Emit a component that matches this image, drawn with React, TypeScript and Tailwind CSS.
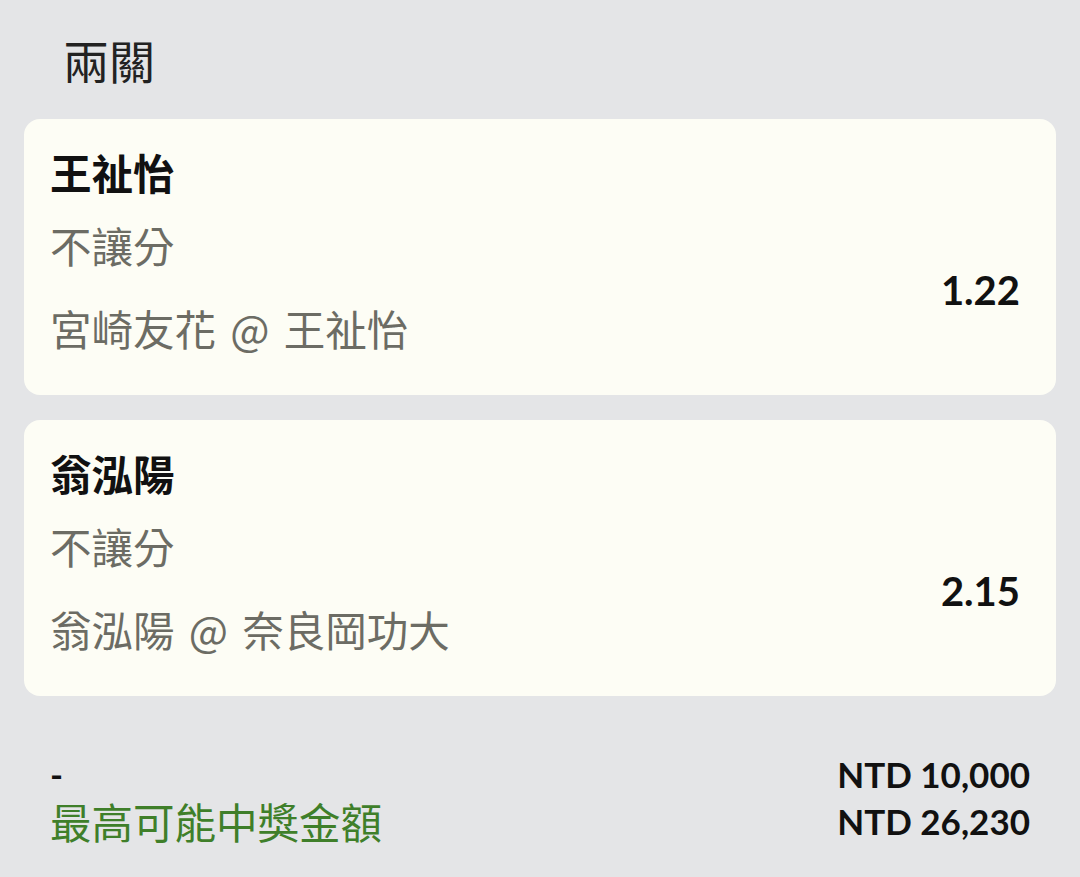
import React from 'react';

const font = { fontFamily: 'Lato, "Noto Sans CJK TC", "Noto Sans", sans-serif' };
const cjk = { fontFamily: '"Noto Sans CJK TC", "Noto Sans", sans-serif' };

interface Leg {
  pick: string;
  market: string;
  match: string;
  odds: string;
}

const legs: Leg[] = [
  { pick: '王祉怡', market: '不讓分', match: '宮崎友花 @ 王祉怡', odds: '1.22' },
  { pick: '翁泓陽', market: '不讓分', match: '翁泓陽 @ 奈良岡功大', odds: '2.15' },
];

const LegCard: React.FC<{ leg: Leg }> = ({ leg }) => (
  <div className="bg-[#fdfdf5] rounded-2xl h-[276px] pl-[26px] pr-[36px] pt-[27px]">
    <div className="text-[41.5px] leading-[52px] font-bold text-[#111]" style={cjk}>
      {leg.pick}
    </div>
    <div className="flex items-center justify-between mt-[21px]">
      <div style={cjk}>
        <div className="text-[41.5px] leading-[52px] text-[#6c6c64]">{leg.market}</div>
        <div className="text-[41.5px] leading-[52px] text-[#6c6c64] mt-[31px] [word-spacing:5px]">
          {leg.match}
        </div>
      </div>
      <div className="text-[40px] leading-[52px] font-bold text-[#111] mt-[6px]">{leg.odds}</div>
    </div>
  </div>
);

export default function App() {
  return (
    <div className="min-h-[877px] w-[1080px] bg-[#e4e5e7] px-[24px] pt-[31px]" style={font}>
      {/* 標題 */}
      <h1 className="text-[46px] leading-[56px] text-[#222] pl-[39px] font-normal" style={cjk}>
        兩關
      </h1>

      <div className="mt-[32px] flex flex-col gap-[25px]">
        {legs.map((leg) => (
          <LegCard key={leg.pick} leg={leg} />
        ))}
      </div>

      {/* 金額 */}
      <div className="mt-[55px] pl-[26px] pr-[26px]">
        <div className="flex justify-between items-center h-[47px]">
          <span className="text-[35px] font-bold text-[#111]">-</span>
          <span className="text-[35px] font-bold text-[#111]">NTD 10,000</span>
        </div>
        <div className="flex justify-between items-center h-[47px]">
          <span className="text-[41.5px] text-[#3f7f2a]" style={cjk}>最高可能中獎金額</span>
          <span className="text-[35px] font-bold text-[#111]">NTD 26,230</span>
        </div>
      </div>
    </div>
  );
}
